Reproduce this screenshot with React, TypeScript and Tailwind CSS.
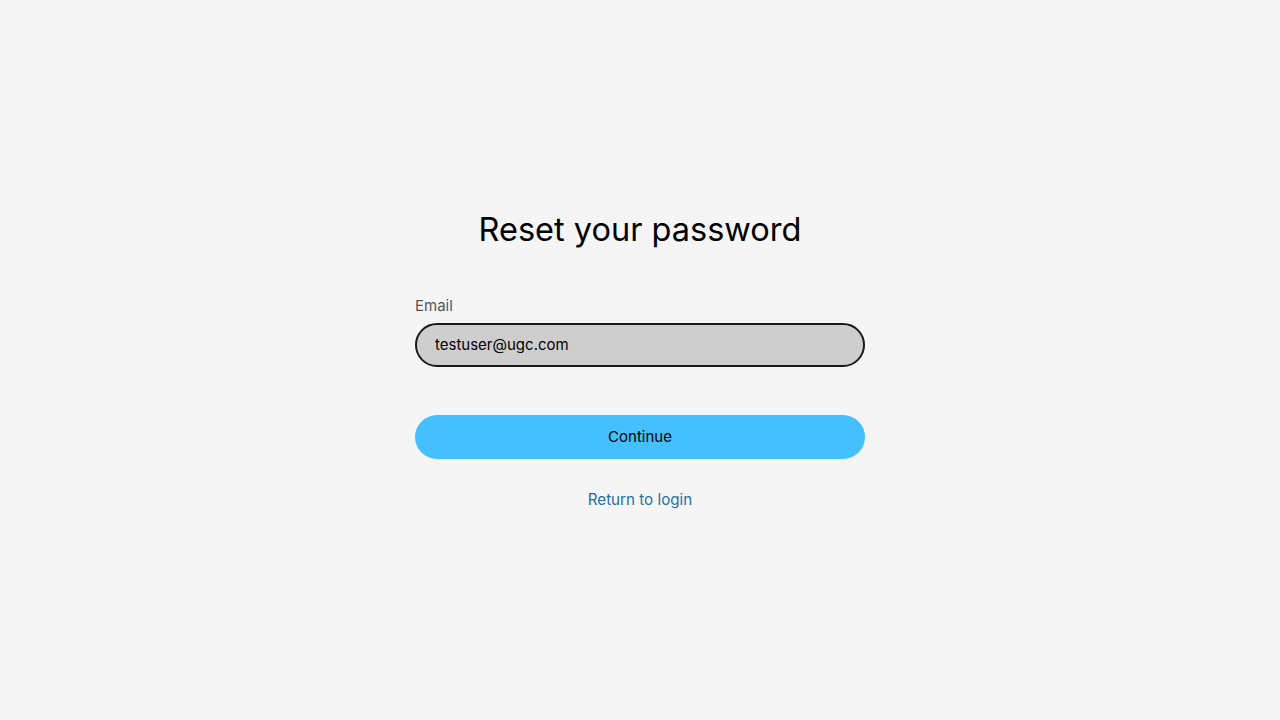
export default function App() {
  return (
    <div
      className="flex min-h-screen items-center justify-center bg-[#f5f5f5] text-black"
      style={{ fontFamily: "Inter, 'Noto Sans', sans-serif" }}
    >
      <div className="flex w-[450px] flex-col">
        <h1 className="mt-[1px] text-center text-[32.5px] leading-10 font-normal">Reset your password</h1>
        <label className="mt-[45px] text-[15px] leading-[22px] text-[#555555]">Email</label>
        <input
          type="email"
          defaultValue="testuser@ugc.com"
          className="mt-[6px] h-11 w-full rounded-full border-2 border-[#1a1a1a] bg-[#cecece] px-[18px] pb-[2px] text-[15px] text-black outline-none"
        />
        <button className="mt-12 h-11 w-full rounded-full bg-[#44c0ff] text-[15px] text-black">
          Continue
        </button>
        <a href="#" className="mt-[30px] text-center text-[15.2px] leading-[22px] text-[#1f6fa8]">
          Return to login
        </a>
      </div>
    </div>
  )
}
